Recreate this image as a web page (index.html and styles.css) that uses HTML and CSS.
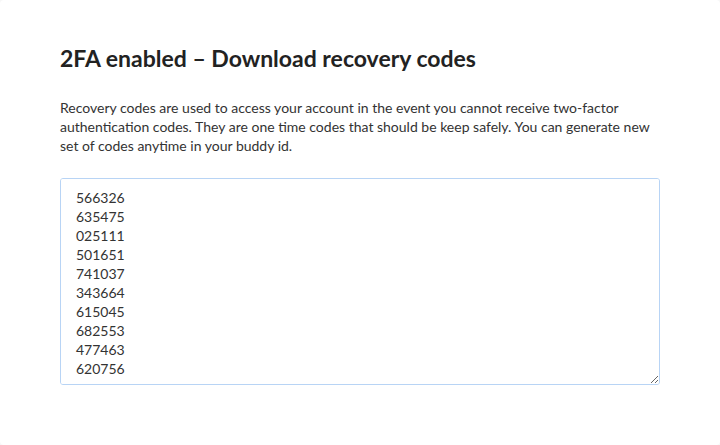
FILE: index.html
```html
<!DOCTYPE html>
<html lang="en">
<head>
  <meta charset="UTF-8"/>
  <meta name="viewport" content="width=device-width, initial-scale=1.0"/>
  <title>Recovery codes</title>
  <link rel="stylesheet" href="styles.css">
</head>
<body>
  <div class="modal">
    <h1>2FA enabled – Download recovery codes</h1>
    <p class="intro">Recovery codes are used to access your account in the event you cannot receive two-factor authentication codes. They are one time codes that should be keep safely. You can generate new set of codes anytime in your buddy id.</p>
    <textarea class="codes" readonly>566326
635475
025111
501651
741037
343664
615045
682553
477463
620756</textarea>
  </div>
</body>
</html>
```

FILE: styles.css
```css
html { background:#f7f7f7; }
body { margin:0; font-family:Lato, "Noto Sans", sans-serif; color:#333; }
.modal { background:white; width:720px; height:445px; box-sizing:border-box; padding:42px 60px 0; border-radius:4px; }
h1 { margin:0; font-size:23px; font-weight:bold; color:#222; line-height:32px; }
.intro { margin:24px 0 0; font-size:14px; line-height:19px; color:#333; }
.codes { display:block; width:600px; height:207px; box-sizing:border-box; margin-top:23px; padding:9px 15px; border:1px solid #b8d4f5; border-radius:3px; font-family:inherit; font-size:14px; line-height:19px; color:#333; resize:both; outline:none; }
```
